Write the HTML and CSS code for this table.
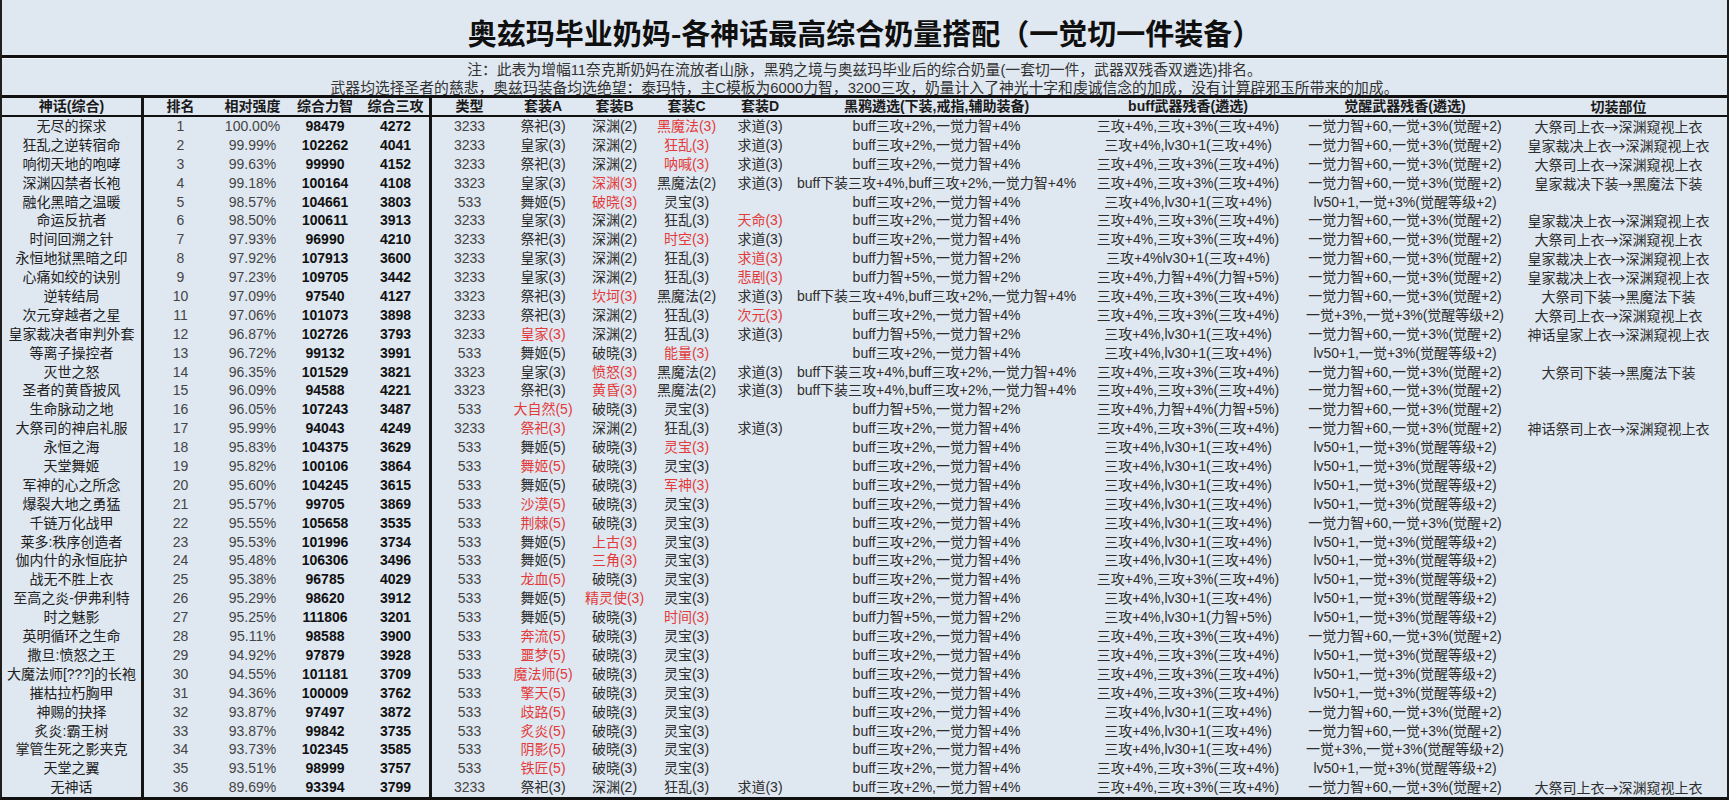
FILE: index.html
```html
<!DOCTYPE html>
<html lang="zh-CN">
<head>
<meta charset="utf-8">
<title>奥兹玛毕业奶妈-各神话最高综合奶量搭配</title>
<link rel="stylesheet" href="styles.css">
</head>
<body>
<div class="sheet">
  <div class="title">奥兹玛毕业奶妈-各神话最高综合奶量搭配（一觉切一件装备）</div>
  <div class="notes">
    <p>注：此表为增幅11奈克斯奶妈在流放者山脉，黑鸦之境与奥兹玛毕业后的综合奶量(一套切一件，武器双残香双遴选)排名。</p>
    <p>武器均选择圣者的慈悲，奥兹玛装备均选绝望：泰玛特，主C模板为6000力智，3200三攻，奶量计入了神光十字和虔诚信念的加成，没有计算辟邪玉所带来的加成。</p>
  </div>
  <div class="row head">
    <span>神话(综合)</span><span>排名</span><span>相对强度</span><span>综合力智</span><span>综合三攻</span><span>类型</span><span>套装A</span><span>套装B</span><span>套装C</span><span>套装D</span><span>黑鸦遴选(下装,戒指,辅助装备)</span><span>buff武器残香(遴选)</span><span>觉醒武器残香(遴选)</span><span>切装部位</span>
  </div>
  <div class="body">
    <div class="row"><span>无尽的探求</span><span>1</span><span>100.00%</span><span>98479</span><span>4272</span><span>3233</span><span>祭祀(3)</span><span>深渊(2)</span><span class="r">黑魔法(3)</span><span>求道(3)</span><span>buff三攻+2%,一觉力智+4%</span><span>三攻+4%,三攻+3%(三攻+4%)</span><span>一觉力智+60,一觉+3%(觉醒+2)</span><span>大祭司上衣→深渊窥视上衣</span></div>
    <div class="row"><span>狂乱之逆转宿命</span><span>2</span><span>99.99%</span><span>102262</span><span>4041</span><span>3233</span><span>皇家(3)</span><span>深渊(2)</span><span class="r">狂乱(3)</span><span>求道(3)</span><span>buff三攻+2%,一觉力智+4%</span><span>三攻+4%,lv30+1(三攻+4%)</span><span>一觉力智+60,一觉+3%(觉醒+2)</span><span>皇家裁决上衣→深渊窥视上衣</span></div>
    <div class="row"><span>响彻天地的咆哮</span><span>3</span><span>99.63%</span><span>99990</span><span>4152</span><span>3233</span><span>祭祀(3)</span><span>深渊(2)</span><span class="r">呐喊(3)</span><span>求道(3)</span><span>buff三攻+2%,一觉力智+4%</span><span>三攻+4%,三攻+3%(三攻+4%)</span><span>一觉力智+60,一觉+3%(觉醒+2)</span><span>大祭司上衣→深渊窥视上衣</span></div>
    <div class="row"><span>深渊囚禁者长袍</span><span>4</span><span>99.18%</span><span>100164</span><span>4108</span><span>3323</span><span>皇家(3)</span><span class="r">深渊(3)</span><span>黑魔法(2)</span><span>求道(3)</span><span>buff下装三攻+4%,buff三攻+2%,一觉力智+4%</span><span>三攻+4%,三攻+3%(三攻+4%)</span><span>一觉力智+60,一觉+3%(觉醒+2)</span><span>皇家裁决下装→黑魔法下装</span></div>
    <div class="row"><span>融化黑暗之温暖</span><span>5</span><span>98.57%</span><span>104661</span><span>3803</span><span>533</span><span>舞姬(5)</span><span class="r">破晓(3)</span><span>灵宝(3)</span><span></span><span>buff三攻+2%,一觉力智+4%</span><span>三攻+4%,lv30+1(三攻+4%)</span><span>lv50+1,一觉+3%(觉醒等级+2)</span><span></span></div>
    <div class="row"><span>命运反抗者</span><span>6</span><span>98.50%</span><span>100611</span><span>3913</span><span>3233</span><span>皇家(3)</span><span>深渊(2)</span><span>狂乱(3)</span><span class="r">天命(3)</span><span>buff三攻+2%,一觉力智+4%</span><span>三攻+4%,三攻+3%(三攻+4%)</span><span>一觉力智+60,一觉+3%(觉醒+2)</span><span>皇家裁决上衣→深渊窥视上衣</span></div>
    <div class="row"><span>时间回溯之针</span><span>7</span><span>97.93%</span><span>96990</span><span>4210</span><span>3233</span><span>祭祀(3)</span><span>深渊(2)</span><span class="r">时空(3)</span><span>求道(3)</span><span>buff三攻+2%,一觉力智+4%</span><span>三攻+4%,三攻+3%(三攻+4%)</span><span>一觉力智+60,一觉+3%(觉醒+2)</span><span>大祭司上衣→深渊窥视上衣</span></div>
    <div class="row"><span>永恒地狱黑暗之印</span><span>8</span><span>97.92%</span><span>107913</span><span>3600</span><span>3233</span><span>皇家(3)</span><span>深渊(2)</span><span>狂乱(3)</span><span class="r">求道(3)</span><span>buff力智+5%,一觉力智+2%</span><span>三攻+4%lv30+1(三攻+4%)</span><span>一觉力智+60,一觉+3%(觉醒+2)</span><span>皇家裁决上衣→深渊窥视上衣</span></div>
    <div class="row"><span>心痛如绞的诀别</span><span>9</span><span>97.23%</span><span>109705</span><span>3442</span><span>3233</span><span>皇家(3)</span><span>深渊(2)</span><span>狂乱(3)</span><span class="r">悲剧(3)</span><span>buff力智+5%,一觉力智+2%</span><span>三攻+4%,力智+4%(力智+5%)</span><span>一觉力智+60,一觉+3%(觉醒+2)</span><span>皇家裁决上衣→深渊窥视上衣</span></div>
    <div class="row"><span>逆转结局</span><span>10</span><span>97.09%</span><span>97540</span><span>4127</span><span>3323</span><span>祭祀(3)</span><span class="r">坎坷(3)</span><span>黑魔法(2)</span><span>求道(3)</span><span>buff下装三攻+4%,buff三攻+2%,一觉力智+4%</span><span>三攻+4%,三攻+3%(三攻+4%)</span><span>一觉力智+60,一觉+3%(觉醒+2)</span><span>大祭司下装→黑魔法下装</span></div>
    <div class="row"><span>次元穿越者之星</span><span>11</span><span>97.06%</span><span>101073</span><span>3898</span><span>3233</span><span>祭祀(3)</span><span>深渊(2)</span><span>狂乱(3)</span><span class="r">次元(3)</span><span>buff三攻+2%,一觉力智+4%</span><span>三攻+4%,三攻+3%(三攻+4%)</span><span>一觉+3%,一觉+3%(觉醒等级+2)</span><span>大祭司上衣→深渊窥视上衣</span></div>
    <div class="row"><span>皇家裁决者审判外套</span><span>12</span><span>96.87%</span><span>102726</span><span>3793</span><span>3233</span><span class="r">皇家(3)</span><span>深渊(2)</span><span>狂乱(3)</span><span>求道(3)</span><span>buff力智+5%,一觉力智+2%</span><span>三攻+4%,lv30+1(三攻+4%)</span><span>一觉力智+60,一觉+3%(觉醒+2)</span><span>神话皇家上衣→深渊窥视上衣</span></div>
    <div class="row"><span>等离子操控者</span><span>13</span><span>96.72%</span><span>99132</span><span>3991</span><span>533</span><span>舞姬(5)</span><span>破晓(3)</span><span class="r">能量(3)</span><span></span><span>buff三攻+2%,一觉力智+4%</span><span>三攻+4%,lv30+1(三攻+4%)</span><span>lv50+1,一觉+3%(觉醒等级+2)</span><span></span></div>
    <div class="row"><span>灭世之怒</span><span>14</span><span>96.35%</span><span>101529</span><span>3821</span><span>3323</span><span>皇家(3)</span><span class="r">愤怒(3)</span><span>黑魔法(2)</span><span>求道(3)</span><span>buff下装三攻+4%,buff三攻+2%,一觉力智+4%</span><span>三攻+4%,三攻+3%(三攻+4%)</span><span>一觉力智+60,一觉+3%(觉醒+2)</span><span>大祭司下装→黑魔法下装</span></div>
    <div class="row"><span>圣者的黄昏披风</span><span>15</span><span>96.09%</span><span>94588</span><span>4221</span><span>3323</span><span>祭祀(3)</span><span class="r">黄昏(3)</span><span>黑魔法(2)</span><span>求道(3)</span><span>buff下装三攻+4%,buff三攻+2%,一觉力智+4%</span><span>三攻+4%,三攻+3%(三攻+4%)</span><span>一觉力智+60,一觉+3%(觉醒+2)</span><span></span></div>
    <div class="row"><span>生命脉动之地</span><span>16</span><span>96.05%</span><span>107243</span><span>3487</span><span>533</span><span class="r">大自然(5)</span><span>破晓(3)</span><span>灵宝(3)</span><span></span><span>buff力智+5%,一觉力智+2%</span><span>三攻+4%,力智+4%(力智+5%)</span><span>一觉力智+60,一觉+3%(觉醒+2)</span><span></span></div>
    <div class="row"><span>大祭司的神启礼服</span><span>17</span><span>95.99%</span><span>94043</span><span>4249</span><span>3233</span><span class="r">祭祀(3)</span><span>深渊(2)</span><span>狂乱(3)</span><span>求道(3)</span><span>buff三攻+2%,一觉力智+4%</span><span>三攻+4%,三攻+3%(三攻+4%)</span><span>一觉力智+60,一觉+3%(觉醒+2)</span><span>神话祭司上衣→深渊窥视上衣</span></div>
    <div class="row"><span>永恒之海</span><span>18</span><span>95.83%</span><span>104375</span><span>3629</span><span>533</span><span>舞姬(5)</span><span>破晓(3)</span><span class="r">灵宝(3)</span><span></span><span>buff三攻+2%,一觉力智+4%</span><span>三攻+4%,lv30+1(三攻+4%)</span><span>lv50+1,一觉+3%(觉醒等级+2)</span><span></span></div>
    <div class="row"><span>天堂舞姬</span><span>19</span><span>95.82%</span><span>100106</span><span>3864</span><span>533</span><span class="r">舞姬(5)</span><span>破晓(3)</span><span>灵宝(3)</span><span></span><span>buff三攻+2%,一觉力智+4%</span><span>三攻+4%,lv30+1(三攻+4%)</span><span>lv50+1,一觉+3%(觉醒等级+2)</span><span></span></div>
    <div class="row"><span>军神的心之所念</span><span>20</span><span>95.60%</span><span>104245</span><span>3615</span><span>533</span><span>舞姬(5)</span><span>破晓(3)</span><span class="r">军神(3)</span><span></span><span>buff三攻+2%,一觉力智+4%</span><span>三攻+4%,lv30+1(三攻+4%)</span><span>lv50+1,一觉+3%(觉醒等级+2)</span><span></span></div>
    <div class="row"><span>爆裂大地之勇猛</span><span>21</span><span>95.57%</span><span>99705</span><span>3869</span><span>533</span><span class="r">沙漠(5)</span><span>破晓(3)</span><span>灵宝(3)</span><span></span><span>buff三攻+2%,一觉力智+4%</span><span>三攻+4%,lv30+1(三攻+4%)</span><span>lv50+1,一觉+3%(觉醒等级+2)</span><span></span></div>
    <div class="row"><span>千链万化战甲</span><span>22</span><span>95.55%</span><span>105658</span><span>3535</span><span>533</span><span class="r">荆棘(5)</span><span>破晓(3)</span><span>灵宝(3)</span><span></span><span>buff三攻+2%,一觉力智+4%</span><span>三攻+4%,lv30+1(三攻+4%)</span><span>一觉力智+60,一觉+3%(觉醒+2)</span><span></span></div>
    <div class="row"><span>莱多:秩序创造者</span><span>23</span><span>95.53%</span><span>101996</span><span>3734</span><span>533</span><span>舞姬(5)</span><span class="r">上古(3)</span><span>灵宝(3)</span><span></span><span>buff三攻+2%,一觉力智+4%</span><span>三攻+4%,lv30+1(三攻+4%)</span><span>lv50+1,一觉+3%(觉醒等级+2)</span><span></span></div>
    <div class="row"><span>伽内什的永恒庇护</span><span>24</span><span>95.48%</span><span>106306</span><span>3496</span><span>533</span><span>舞姬(5)</span><span class="r">三角(3)</span><span>灵宝(3)</span><span></span><span>buff三攻+2%,一觉力智+4%</span><span>三攻+4%,lv30+1(三攻+4%)</span><span>lv50+1,一觉+3%(觉醒等级+2)</span><span></span></div>
    <div class="row"><span>战无不胜上衣</span><span>25</span><span>95.38%</span><span>96785</span><span>4029</span><span>533</span><span class="r">龙血(5)</span><span>破晓(3)</span><span>灵宝(3)</span><span></span><span>buff三攻+2%,一觉力智+4%</span><span>三攻+4%,三攻+3%(三攻+4%)</span><span>lv50+1,一觉+3%(觉醒等级+2)</span><span></span></div>
    <div class="row"><span>至高之炎-伊弗利特</span><span>26</span><span>95.29%</span><span>98620</span><span>3912</span><span>533</span><span>舞姬(5)</span><span class="r">精灵使(3)</span><span>灵宝(3)</span><span></span><span>buff三攻+2%,一觉力智+4%</span><span>三攻+4%,lv30+1(三攻+4%)</span><span>lv50+1,一觉+3%(觉醒等级+2)</span><span></span></div>
    <div class="row"><span>时之魅影</span><span>27</span><span>95.25%</span><span>111806</span><span>3201</span><span>533</span><span>舞姬(5)</span><span>破晓(3)</span><span class="r">时间(3)</span><span></span><span>buff力智+5%,一觉力智+2%</span><span>三攻+4%,lv30+1(力智+5%)</span><span>lv50+1,一觉+3%(觉醒等级+2)</span><span></span></div>
    <div class="row"><span>英明循环之生命</span><span>28</span><span>95.11%</span><span>98588</span><span>3900</span><span>533</span><span class="r">奔流(5)</span><span>破晓(3)</span><span>灵宝(3)</span><span></span><span>buff三攻+2%,一觉力智+4%</span><span>三攻+4%,三攻+3%(三攻+4%)</span><span>一觉力智+60,一觉+3%(觉醒+2)</span><span></span></div>
    <div class="row"><span>撒旦:愤怒之王</span><span>29</span><span>94.92%</span><span>97879</span><span>3928</span><span>533</span><span class="r">噩梦(5)</span><span>破晓(3)</span><span>灵宝(3)</span><span></span><span>buff三攻+2%,一觉力智+4%</span><span>三攻+4%,三攻+3%(三攻+4%)</span><span>lv50+1,一觉+3%(觉醒等级+2)</span><span></span></div>
    <div class="row"><span>大魔法师[???]的长袍</span><span>30</span><span>94.55%</span><span>101181</span><span>3709</span><span>533</span><span class="r">魔法师(5)</span><span>破晓(3)</span><span>灵宝(3)</span><span></span><span>buff三攻+2%,一觉力智+4%</span><span>三攻+4%,三攻+3%(三攻+4%)</span><span>lv50+1,一觉+3%(觉醒等级+2)</span><span></span></div>
    <div class="row"><span>摧枯拉朽胸甲</span><span>31</span><span>94.36%</span><span>100009</span><span>3762</span><span>533</span><span class="r">擎天(5)</span><span>破晓(3)</span><span>灵宝(3)</span><span></span><span>buff三攻+2%,一觉力智+4%</span><span>三攻+4%,三攻+3%(三攻+4%)</span><span>lv50+1,一觉+3%(觉醒等级+2)</span><span></span></div>
    <div class="row"><span>神赐的抉择</span><span>32</span><span>93.87%</span><span>97497</span><span>3872</span><span>533</span><span class="r">歧路(5)</span><span>破晓(3)</span><span>灵宝(3)</span><span></span><span>buff三攻+2%,一觉力智+4%</span><span>三攻+4%,lv30+1(三攻+4%)</span><span>一觉力智+60,一觉+3%(觉醒+2)</span><span></span></div>
    <div class="row"><span>炙炎:霸王树</span><span>33</span><span>93.87%</span><span>99842</span><span>3735</span><span>533</span><span class="r">炙炎(5)</span><span>破晓(3)</span><span>灵宝(3)</span><span></span><span>buff三攻+2%,一觉力智+4%</span><span>三攻+4%,lv30+1(三攻+4%)</span><span>一觉力智+60,一觉+3%(觉醒+2)</span><span></span></div>
    <div class="row"><span>掌管生死之影夹克</span><span>34</span><span>93.73%</span><span>102345</span><span>3585</span><span>533</span><span class="r">阴影(5)</span><span>破晓(3)</span><span>灵宝(3)</span><span></span><span>buff三攻+2%,一觉力智+4%</span><span>三攻+4%,lv30+1(三攻+4%)</span><span>一觉+3%,一觉+3%(觉醒等级+2)</span><span></span></div>
    <div class="row"><span>天堂之翼</span><span>35</span><span>93.51%</span><span>98999</span><span>3757</span><span>533</span><span class="r">铁匠(5)</span><span>破晓(3)</span><span>灵宝(3)</span><span></span><span>buff三攻+2%,一觉力智+4%</span><span>三攻+4%,三攻+3%(三攻+4%)</span><span>lv50+1,一觉+3%(觉醒等级+2)</span><span></span></div>
    <div class="row"><span>无神话</span><span>36</span><span>89.69%</span><span>93394</span><span>3799</span><span>3233</span><span>祭祀(3)</span><span>深渊(2)</span><span>狂乱(3)</span><span>求道(3)</span><span>buff三攻+2%,一觉力智+4%</span><span>三攻+4%,三攻+3%(三攻+4%)</span><span>一觉力智+60,一觉+3%(觉醒+2)</span><span>大祭司上衣→深渊窥视上衣</span></div>
  </div>
</div>
</body>
</html>
```

FILE: styles.css
```css
* {
  box-sizing: border-box;
  margin: 0;
  padding: 0;
}

html,
body {
  background: #ffffff;
}

body {
  margin: 0;
  width: 1729px;
  height: 802px;
  overflow: hidden;
  font-family: "Liberation Sans", "Noto Sans CJK SC", sans-serif;
  color: #2e2e2e;
}

.sheet {
  width: 1729px;
  background: #dfe7f0;
  border-left: 2px solid #1e1e1e;
  border-right: 2px solid #1e1e1e;
  border-bottom: 3px solid #111111;
}

.title {
  height: 58px;
  padding-top: 8px;
  border-bottom: 3px solid #111111;
  display: flex;
  align-items: center;
  justify-content: center;
  font-family: "Noto Sans CJK SC", sans-serif;
  font-size: 29px;
  font-weight: bold;
  color: #0f0f0f;
  white-space: nowrap;
}

.notes {
  height: 37px;
  padding-top: 2px;
  border-top: 1px solid #f4f7fa;
  text-align: center;
  font-size: 14.8px;
  line-height: 18px;
  color: #333333;
  white-space: nowrap;
}

.row {
  display: grid;
  grid-template-columns: 142px 73px 71px 74px 70px 75px 72px 71px 73px 74px 279px 224px 210px 1fr;
  height: 18.9px;
  font-size: 14px;
  line-height: 18.9px;
}

.row > span {
  display: block;
  text-align: center;
  white-space: nowrap;
  overflow: visible;
}

.row > span:nth-child(1),
.row > span:nth-child(5) {
  border-right: 3px solid #151515;
}

.row > span:nth-child(1) {
  color: #222222;
}

.row > span:nth-child(2),
.row > span:nth-child(3),
.row > span:nth-child(6) {
  color: #444444;
}

.row > span:nth-child(4),
.row > span:nth-child(5) {
  font-weight: bold;
  color: #111111;
}

.row > span:nth-child(14) {
  font-family: "Noto Sans CJK SC", sans-serif;
}

.row.head {
  height: 22px;
  line-height: 17px;
  border-top: 3px solid #111111;
  border-bottom: 2px solid #111111;
}

.row.head > span {
  font-weight: bold;
  color: #1a1a1a;
}

.row > span.r {
  color: #e23b3b;
}
```
